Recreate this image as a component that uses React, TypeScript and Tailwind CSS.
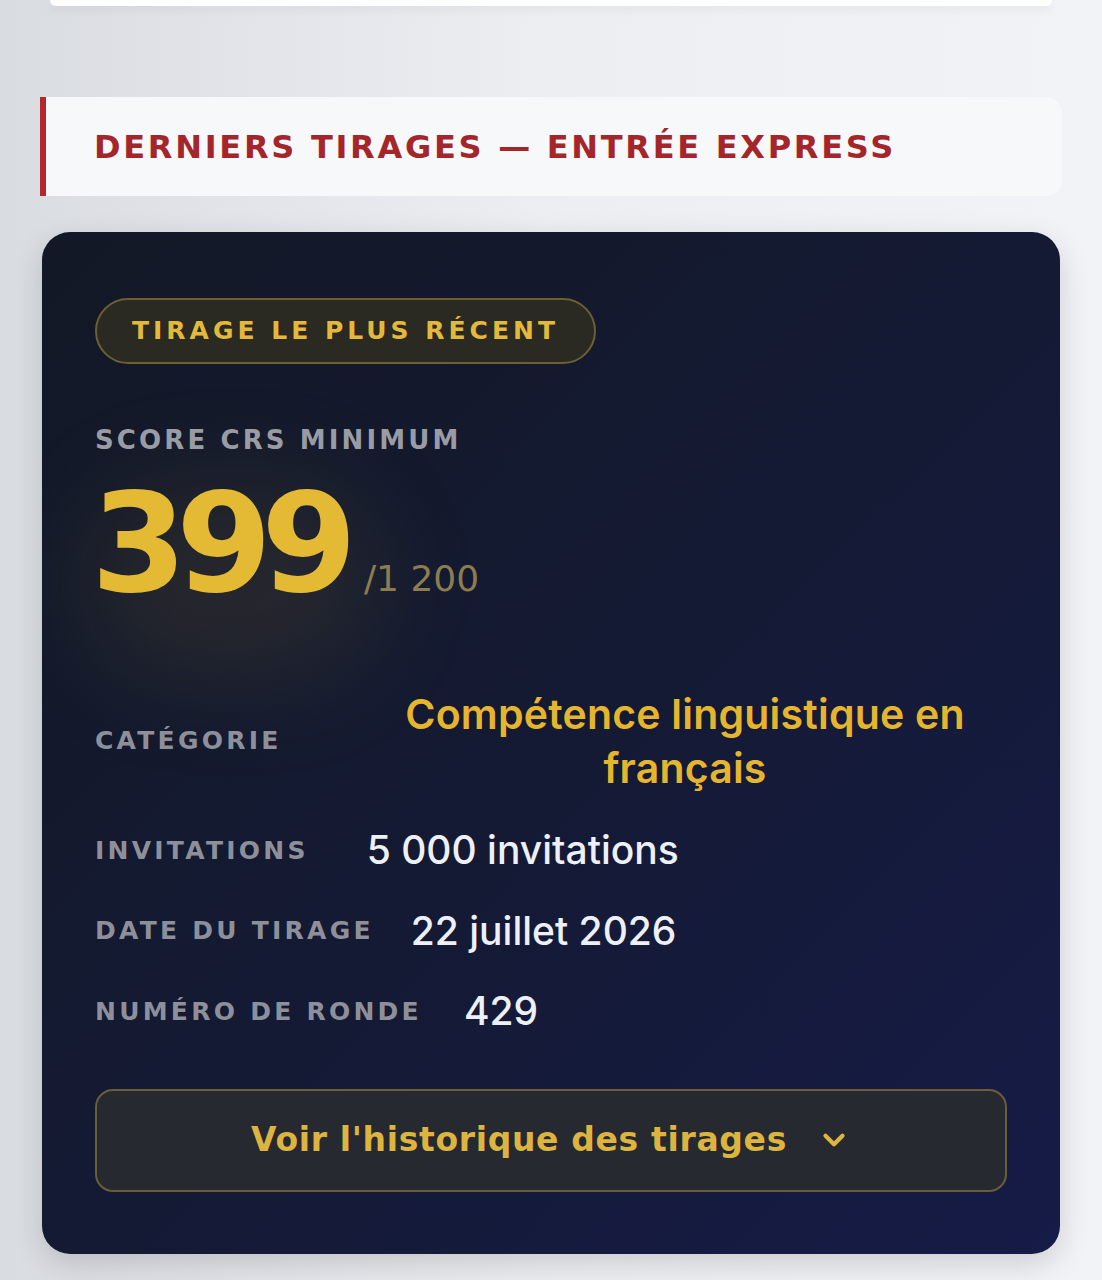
import { ChevronDown } from "lucide-react"

const heading = { fontFamily: '"DejaVu Sans", "Open Sans", sans-serif' }
const body = { fontFamily: 'Inter, "Noto Sans", sans-serif' }

function Row({ label, value, gap }: { label: string; value: string; gap: string }) {
  return (
    <div className={`flex items-center ${gap}`}>
      <span style={heading} className="text-[25px] font-bold uppercase tracking-[0.13em] text-[#8d909b]">
        {label}
      </span>
      <span style={body} className="text-[39px] font-medium text-[#eef0f7]">
        {value}
      </span>
    </div>
  )
}

export default function App() {
  return (
    <div className="min-h-[1280px] w-full bg-gradient-to-r from-[#d9dce1] via-[#eceef2] to-[#f1f3f7]">
      <div className="mx-[50px] h-[6px] rounded-b-[24px] bg-white shadow-[0_4px_10px_rgba(0,0,0,0.06)]" />

      <div className="ml-[40px] mr-[40px] mt-[91px] flex h-[99px] items-center rounded-r-[16px] border-l-[6px] border-[#b3282b] bg-[#f7f8fa] pl-[48px]">
        <h2 style={heading} className="text-[32px] font-bold uppercase tracking-[0.085em] text-[#a4262a]">
          Derniers tirages — Entrée Express
        </h2>
      </div>

      <div className="relative ml-[42px] mr-[42px] mt-[36px] overflow-hidden rounded-[28px] bg-gradient-to-br from-[#131826] via-[#141a33] to-[#161b47] px-[53px] pb-[62px] pt-[66px] shadow-[0_10px_30px_rgba(0,0,0,0.15)]">
        <div className="pointer-events-none absolute left-[40px] top-[250px] h-[200px] w-[300px] rounded-full bg-[#c9a233]/10 blur-[50px]" />

        <div className="relative">
          <div className="inline-flex h-[66px] w-[501px] items-center justify-center rounded-full border-2 border-[#6e5f33] bg-[#2a2922]">
            <span style={heading} className="text-[25px] font-bold uppercase tracking-[0.16em] text-[#e2b93b]">
              Tirage le plus récent
            </span>
          </div>

          <div style={heading} className="mt-[57px] text-[26px] font-bold uppercase tracking-[0.12em] text-[#9a9ca5]">
            Score CRS minimum
          </div>

          <div className="mt-[24px] flex items-end">
            <span style={heading} className="-ml-[4px] text-[138px] font-bold leading-[120px] tracking-[-0.08em] text-[#e4ba35]">
              399
            </span>
            <span style={heading} className="mb-[-2px] ml-[18px] text-[36px] text-[#8c7c50]">
              /1 200
            </span>
          </div>

          <div className="mt-[83px] flex items-center">
            <span style={heading} className="text-[25px] font-bold uppercase tracking-[0.13em] text-[#8d909b]">
              Catégorie
            </span>
            <span style={body} className="ml-auto w-[644px] text-center text-[41px] font-semibold leading-[54px] tracking-[0.005em] text-[#e6b52e]">
              Compétence linguistique en français
            </span>
          </div>

          <div className="mt-[26px] flex flex-col gap-[22px]">
            <Row label="Invitations" value="5 000 invitations" gap="gap-[58px]" />
            <Row label="Date du tirage" value="22 juillet 2026" gap="gap-[37px]" />
            <Row label="Numéro de ronde" value="429" gap="gap-[42px]" />
          </div>

          <button className="mt-[48px] flex h-[103px] w-full items-center justify-center gap-[30px] rounded-[18px] border-2 border-[#6a5d37] bg-[#272930]">
            <span style={heading} className="text-[33px] font-bold tracking-[0.02em] text-[#dcb43f]">
              Voir l'historique des tirages
            </span>
            <ChevronDown className="h-[34px] w-[34px] text-[#dcb43f]" strokeWidth={3} />
          </button>
        </div>
      </div>
    </div>
  )
}
